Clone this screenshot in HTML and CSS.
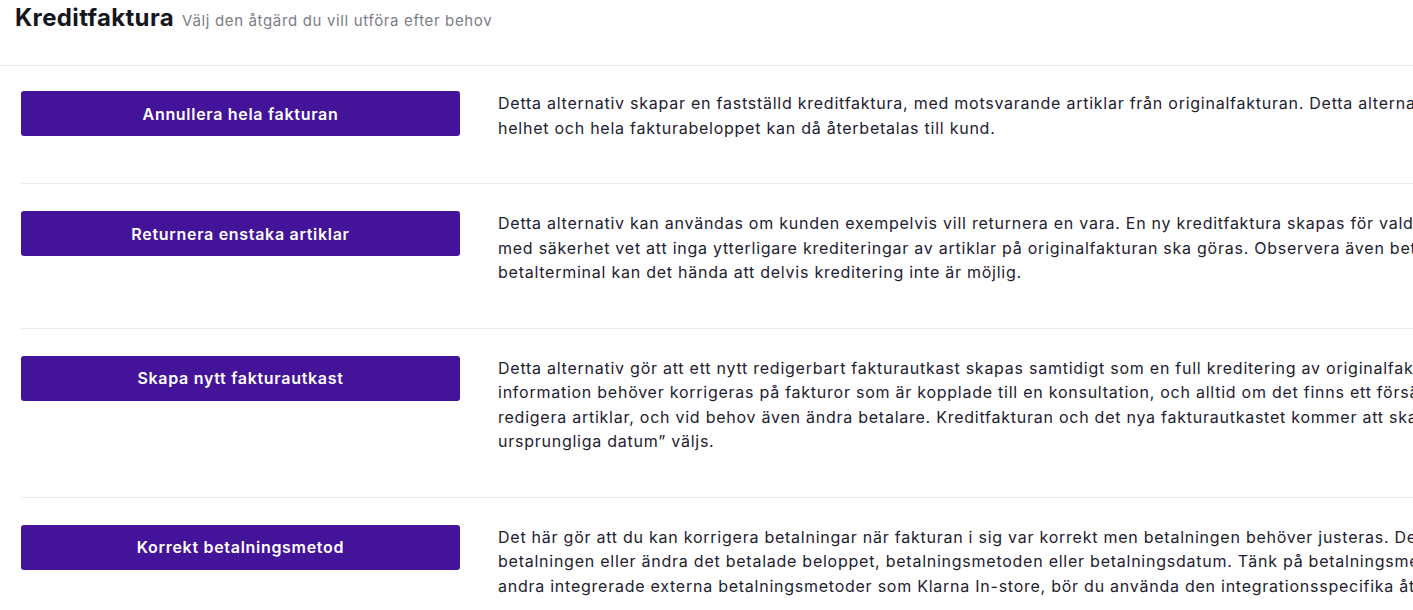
FILE: index.html
```html
<!DOCTYPE html>
<html lang="sv">
<head>
<meta charset="utf-8">
<title>Kreditfaktura</title>
<link rel="stylesheet" href="styles.css">
</head>
<body>
<header class="page-header">
  <h1 class="title">Kreditfaktura</h1>
  <span class="subtitle">Välj den åtgärd du vill utföra efter behov</span>
</header>
<main class="options">
  <section class="option">
    <button class="action-btn" type="button">Annullera hela fakturan</button>
    <p class="option-text">Detta alternativ skapar en fastställd kreditfaktura, med motsvarande artiklar från originalfakturan. Detta alternativ krediterar fakturan i sin helhet och hela fakturabeloppet kan då återbetalas till kund.</p>
  </section>
  <section class="option">
    <button class="action-btn" type="button">Returnera enstaka artiklar</button>
    <p class="option-text">Detta alternativ kan användas om kunden exempelvis vill returnera en vara. En ny kreditfaktura skapas för valda artiklar. Använd detta om du med säkerhet vet att inga ytterligare krediteringar av artiklar på originalfakturan ska göras. Observera även betalningssätt: vid betalning via betalterminal kan det hända att delvis kreditering inte är möjlig.</p>
  </section>
  <section class="option">
    <button class="action-btn" type="button">Skapa nytt fakturautkast</button>
    <p class="option-text">Detta alternativ gör att ett nytt redigerbart fakturautkast skapas samtidigt som en full kreditering av originalfakturan görs. Använd detta när information behöver korrigeras på fakturor som är kopplade till en konsultation, och alltid om det finns ett försäkringsbolag med. Du kan redigera artiklar, och vid behov även ändra betalare. Kreditfakturan och det nya fakturautkastet kommer att skapas idag om inte ”Använd ursprungliga datum” väljs.</p>
  </section>
  <section class="option">
    <button class="action-btn" type="button">Korrekt betalningsmetod</button>
    <p class="option-text">Det här gör att du kan korrigera betalningar när fakturan i sig var korrekt men betalningen behöver justeras. Det kan vara att ta bort hela betalningen eller ändra det betalade beloppet, betalningsmetoden eller betalningsdatum. Tänk på betalningsmetoden; om den är Swish eller andra integrerade externa betalningsmetoder som Klarna In-store, bör du använda den integrationsspecifika återbetalningen.</p>
  </section>
</main>
</body>
</html>
```
FILE: styles.css
```css
html, body {
  margin: 0;
  padding: 0;
  overflow: hidden;
  background: #ffffff;
}

body {
  font-family: Inter, "Noto Sans", "Liberation Sans", sans-serif;
  color: #1d2130;
}

.page-header {
  display: flex;
  align-items: baseline;
  gap: 8px;
  height: 66px;
  box-sizing: border-box;
  padding: 2px 15px 0;
  border-bottom: 1px solid #e9e9ec;
}

.title {
  margin: 0;
  font-size: 24px;
  line-height: 32px;
  font-weight: 700;
  color: #141622;
  letter-spacing: 0.35px;
}

.subtitle {
  font-size: 15px;
  letter-spacing: 0.65px;
  color: #7b7d85;
}

.options {
  padding-left: 21px;
}

.option {
  display: flex;
  align-items: flex-start;
  gap: 38px;
  padding: 27px 0 43px;
  border-top: 1px solid #ebebee;
}

.option:first-child {
  border-top: none;
  padding-top: 25px;
}

.action-btn {
  flex: 0 0 439px;
  height: 45px;
  border: none;
  border-radius: 3px;
  background: #43139a;
  color: #ffffff;
  font-family: inherit;
  font-size: 16px;
  font-weight: 600;
  letter-spacing: 0.7px;
  cursor: pointer;
}

.option-text {
  flex: 0 0 1165px;
  margin: 0;
  font-size: 16px;
  line-height: 24.5px;
  letter-spacing: 0.75px;
  color: #1d2130;
}
```
